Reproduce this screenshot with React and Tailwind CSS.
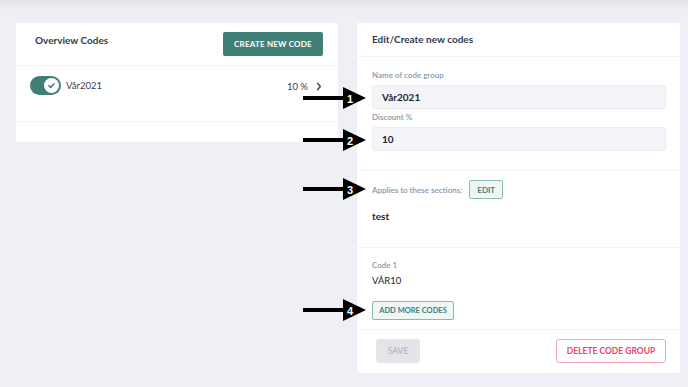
import React from 'react';

const font = { fontFamily: '"Lato", "Open Sans", sans-serif' };

function Toggle() {
  return (
    <div className="w-[31px] h-[19px] rounded-full bg-[#3f7f76] flex items-center justify-end pr-[2px]">
      <div className="w-[15px] h-[15px] rounded-full bg-white flex items-center justify-center">
        <svg width="9" height="9" viewBox="0 0 24 24" fill="none" stroke="#3f7f76" strokeWidth="4" strokeLinecap="round" strokeLinejoin="round">
          <path d="M5 12.5l4.5 4.5L19 7.5" />
        </svg>
      </div>
    </div>
  );
}

function Arrow({ top, n }) {
  return (
    <svg className="absolute left-[303px]" style={{ top: top - 12 }} width="64" height="24" viewBox="0 0 64 24">
      <rect x="0" y="10" width="42" height="4" fill="#000" />
      <polygon points="40,1 40,23 63,12" fill="#000" />
      <text x="44" y="16.5" fill="#fff" fontSize="11" fontWeight="700" fontFamily="Liberation Sans, sans-serif">{n}</text>
    </svg>
  );
}

function Label({ children }) {
  return <div className="text-[8px] font-semibold text-[#8d95a7] leading-[12px]">{children}</div>;
}

function Input({ value }) {
  return (
    <div className="h-[24px] rounded-[3px] bg-[#f3f5f9] border border-[#e9ecf1] flex items-center px-[9px] text-[10px] font-bold text-[#1f2430]">
      {value}
    </div>
  );
}

export default function App() {
  return (
    <div
      className="relative w-[688px] h-[387px] overflow-hidden bg-[linear-gradient(to_bottom,#e1e3e7_0px,#eceef2_10px,#eef0f5_22px)] pt-[23px] pl-[16px] flex gap-[19px] items-start"
      style={font}
    >
      {/* Overview card */}
      <div className="w-[322px] bg-white rounded-[2px]">
        <div className="h-[43px] flex items-center justify-between pl-[19px] pr-[15px] border-b border-[#f1f3f6]">
          <div className="text-[10px] font-bold text-[#343b4a] -mt-[7px]">Overview Codes</div>
          <button className="w-[100px] h-[24px] rounded-[2px] bg-[#3f7f76] text-white text-[8px] font-bold tracking-[0.2px]">
            CREATE NEW CODE
          </button>
        </div>
        <div className="h-[56px] border-b border-[#f1f3f6] flex items-start pt-[10px] pl-[14px] pr-[16px]">
          <Toggle />
          <div className="ml-[5px] text-[9.5px] text-[#3b4150] leading-[19px]">Vår2021</div>
          <div className="ml-auto flex items-center gap-[8px] leading-[19px] mt-[1px]">
            <span className="text-[9.5px] text-[#3b4150]">10 %</span>
            <svg width="6" height="9" viewBox="0 0 6 10" fill="none" stroke="#3b4150" strokeWidth="1.6" strokeLinecap="round" strokeLinejoin="round">
              <path d="M1.5 1.5L4.5 5L1.5 8.5" />
            </svg>
          </div>
        </div>
        <div className="h-[20px]" />
      </div>

      {/* Edit card */}
      <div className="w-[323px] bg-white rounded-[2px]">
        <div className="h-[34px] flex items-center pl-[15px] border-b border-[#f1f3f6]">
          <div className="text-[10px] font-bold text-[#343b4a]">Edit/Create new codes</div>
        </div>
        <div className="pl-[15px] pr-[14px] pt-[12px] pb-[19px] border-b border-[#f1f3f6]">
          <Label>Name of code group</Label>
          <div className="mt-[4px]">
            <Input value="Vår2021" />
          </div>
          <div className="mt-[2px]">
            <Label>Discount %</Label>
          </div>
          <div className="mt-[4px]">
            <Input value="10" />
          </div>
        </div>
        <div className="pl-[15px] pr-[14px] pt-[9px] h-[77px] border-b border-[#f1f3f6]">
          <div className="flex items-center gap-[7px]">
            <Label>Applies to these sections:</Label>
            <button className="w-[34px] h-[19px] rounded-[2px] bg-[#eff6f4] border border-[#8ab9b0] text-[#3f7f76] text-[8px] font-bold">
              EDIT
            </button>
          </div>
          <div className="mt-[10px] text-[10px] font-bold text-[#1f2430]">test</div>
        </div>
        <div className="pl-[15px] pr-[14px] pt-[11px] h-[82px] border-b border-[#f1f3f6]">
          <Label>Code 1</Label>
          <div className="mt-[2px] text-[9.5px] text-[#1f2430] leading-[15px]">VÅR10</div>
          <button className="mt-[13px] w-[82px] h-[19px] rounded-[2px] bg-[#eff6f4] border border-[#8ab9b0] text-[#3f7f76] text-[7.5px] font-bold">
            ADD MORE CODES
          </button>
        </div>
        <div className="h-[43px] flex items-start justify-between pt-[9px] pl-[19px] pr-[14px]">
          <button className="w-[44px] h-[24px] rounded-[3px] bg-[#e3e5ea] text-[#b6bac5] text-[8.5px] font-bold">SAVE</button>
          <button className="w-[110px] h-[24px] rounded-[3px] bg-white border border-[#f3a6b6] text-[#e5466e] text-[8.5px] font-bold">
            DELETE CODE GROUP
          </button>
        </div>
      </div>

      <Arrow top={98} n="1" />
      <Arrow top={140} n="2" />
      <Arrow top={189} n="3" />
      <Arrow top={310} n="4" />
    </div>
  );
}
